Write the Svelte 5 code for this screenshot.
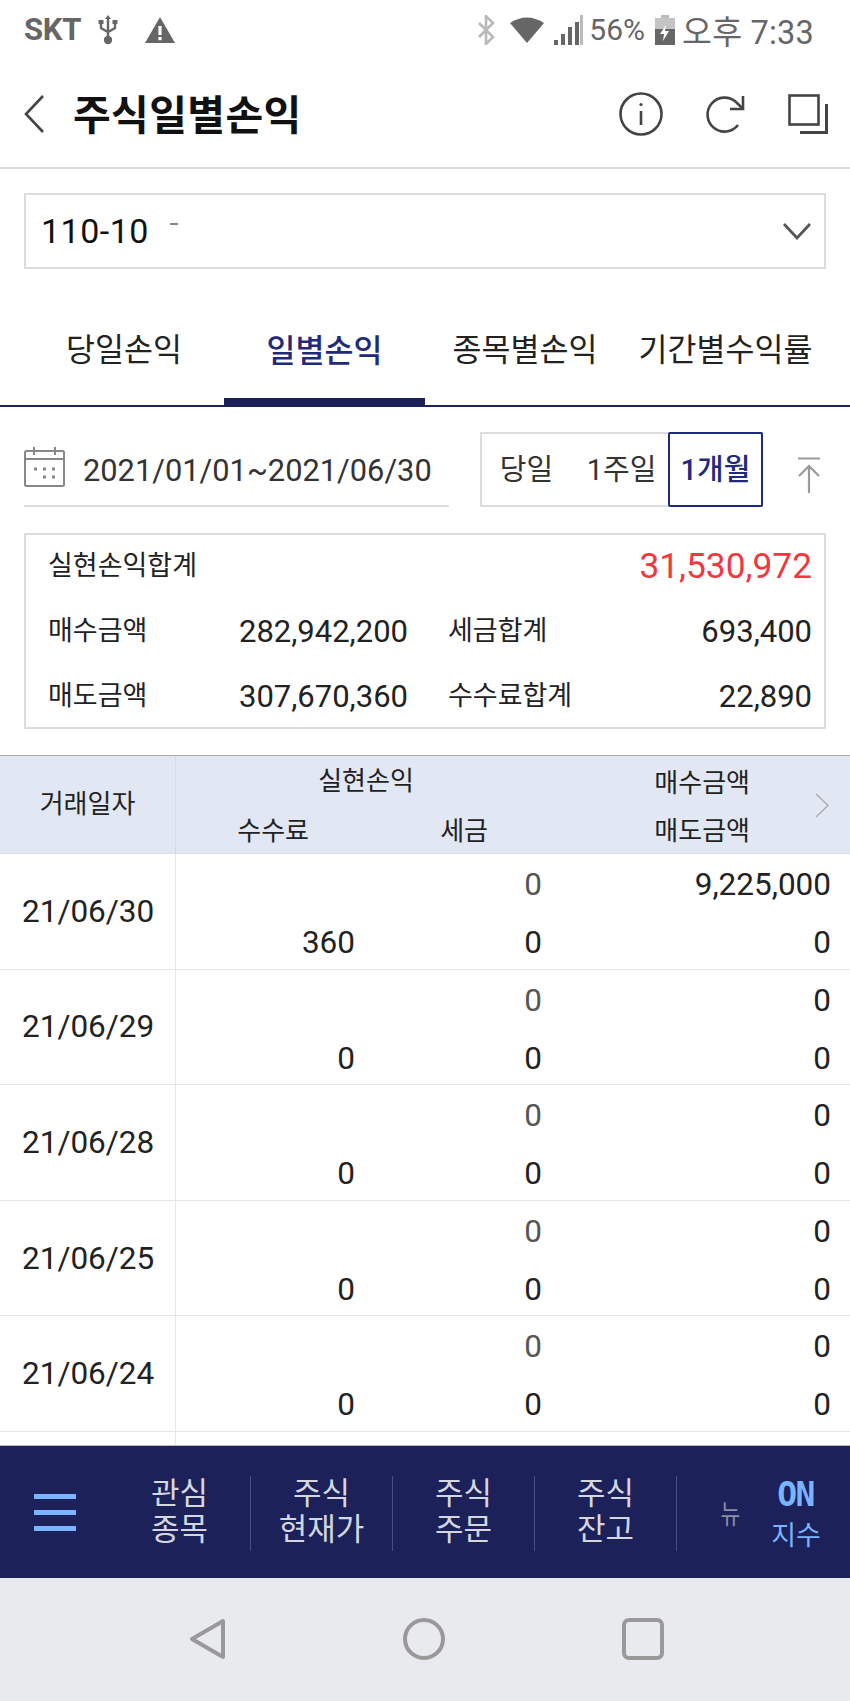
<script>
  const rows = [
    { date: '21/06/30', a: '0', b: '9,225,000', fee: '360', tax: '0', sell: '0' },
    { date: '21/06/29', a: '0', b: '0', fee: '0', tax: '0', sell: '0' },
    { date: '21/06/28', a: '0', b: '0', fee: '0', tax: '0', sell: '0' },
    { date: '21/06/25', a: '0', b: '0', fee: '0', tax: '0', sell: '0' },
    { date: '21/06/24', a: '0', b: '0', fee: '0', tax: '0', sell: '0' }
  ];
  const tabs = ['당일손익', '일별손익', '종목별손익', '기간별수익률'];
  const quick = [
    ['관심', '종목'],
    ['주식', '현재가'],
    ['주식', '주문'],
    ['주식', '잔고']
  ];
</script>

<div class="screen">
  <div class="status">
    <span class="carrier">SKT</span>
    <svg class="usb" width="22" height="30" viewBox="0 0 22 30" fill="none" stroke="#666" stroke-width="2.4">
      <path d="M11 2v24M4 8v5l7 4 7-4V8" />
      <circle cx="11" cy="25" r="3" fill="#666" />
      <path d="M11 0l3 4H8z" fill="#666" stroke="none" />
      <rect x="1.5" y="5" width="5" height="4" fill="#666" stroke="none" />
      <rect x="15.5" y="5" width="5" height="4" fill="#666" stroke="none" />
    </svg>
    <svg class="warn" width="32" height="28" viewBox="0 0 32 28">
      <path d="M16 1L31 27H1z" fill="#666" />
      <rect x="14.4" y="10" width="3.2" height="9" fill="#fff" />
      <rect x="14.4" y="21" width="3.2" height="3.2" fill="#fff" />
    </svg>
    <span class="spacer"></span>
    <svg width="20" height="30" viewBox="0 0 20 30" fill="none" stroke="#b9b9b9" stroke-width="2.6">
      <path d="M3 8l14 14-7 7V1l7 7L3 22" />
    </svg>
    <svg class="wifi" width="34" height="26" viewBox="0 0 34 26"><path d="M0 6Q17-5 34 6L17 26z" fill="#666" /></svg>
    <svg class="signal" width="30" height="30" viewBox="0 0 30 30">
      <rect x="1" y="25" width="4" height="5" fill="#666" />
      <rect x="8" y="19" width="4" height="11" fill="#666" />
      <rect x="15" y="12" width="4" height="18" fill="#666" />
      <rect x="22" y="7" width="4" height="23" fill="#666" />
      <rect x="27" y="0" width="3" height="30" fill="#bbb" />
    </svg>
    <span class="pct">56%</span>
    <svg class="batt" width="20" height="30" viewBox="0 0 20 30">
      <rect x="6" y="0" width="8" height="3" fill="#bbb" />
      <rect x="0" y="3" width="20" height="11" fill="#c4c4c4" />
      <rect x="0" y="14" width="20" height="16" fill="#666" />
      <path d="M11 10L5 19h4l-1 7 6-10h-4z" fill="#fff" />
    </svg>
    <span class="clock">오후 7:33</span>
  </div>

  <header class="appbar">
    <svg width="22" height="38" viewBox="0 0 22 38" fill="none" stroke="#444" stroke-width="2.6">
      <path d="M20 1L3 19l17 18" />
    </svg>
    <h1>주식일별손익</h1>
    <span class="spacer"></span>
    <svg class="ic-info" width="44" height="44" viewBox="0 0 44 44" fill="none" stroke="#444" stroke-width="2.6">
      <circle cx="22" cy="22" r="20.5" />
      <path d="M22 19v14" />
      <circle cx="22" cy="12.5" r="1.6" fill="#444" stroke="none" />
    </svg>
    <svg class="ic-refresh" width="40" height="40" viewBox="0 0 40 40" fill="none" stroke="#444" stroke-width="2.6">
      <path d="M33 31A17 17 0 1 1 31 8l6 6" />
      <path d="M38 2v13H25" />
    </svg>
    <svg class="ic-copy" width="40" height="40" viewBox="0 0 40 40" fill="none" stroke="#444" stroke-width="2.6">
      <rect x="1.5" y="1.5" width="29" height="29" />
      <path d="M38.5 10v28.5H12" stroke-width="3" />
    </svg>
  </header>

  <div class="account">
    <span>110-10</span>
    <i class="dash"></i>
    <span class="spacer"></span>
    <svg width="28" height="17" viewBox="0 0 28 17" fill="none" stroke="#555" stroke-width="2.8">
      <path d="M1 1l13 14L27 1" />
    </svg>
  </div>

  <nav class="tabs">
    {#each tabs as tab, i}
      <div class="tab" class:on={i === 1}>{tab}</div>
    {/each}
  </nav>

  <div class="filter">
    <div class="dates">
      <svg width="42" height="40" viewBox="0 0 42 40" fill="none" stroke="#888" stroke-width="2">
        <rect x="1" y="4" width="39" height="35" rx="1.5" />
        <path d="M1 12h39M10 0v8M31 0v8" />
        <path d="M10 22h3M19 22h3M28 22h3M19 30h3M28 30h3" stroke-width="3" />
      </svg>
      <span>2021/01/01~2021/06/30</span>
    </div>
    <div class="segment">
      <div class="seg s1">당일</div>
      <div class="seg s2">1주일</div>
      <div class="seg active">1개월</div>
    </div>
    <svg class="totop" width="24" height="36" viewBox="0 0 24 36" fill="none" stroke="#9a9a9a" stroke-width="2.2">
      <path d="M1 1.5h22M12 36V9M2 19L12 9l10 10" />
    </svg>
  </div>

  <section class="summary">
    <div class="sum-top">
      <span class="lab">실현손익합계</span>
      <span class="red">31,530,972</span>
    </div>
    <div class="sum-row">
      <span class="lab">매수금액</span>
      <span class="val v1">282,942,200</span>
      <span class="lab l2">세금합계</span>
      <span class="val">693,400</span>
    </div>
    <div class="sum-row">
      <span class="lab">매도금액</span>
      <span class="val v1">307,670,360</span>
      <span class="lab l2">수수료합계</span>
      <span class="val">22,890</span>
    </div>
  </section>

  <section class="table">
    <div class="thead">
      <div class="th-date">거래일자</div>
      <div class="cols">
        <div class="th-pl">실현손익</div>
        <div class="th-r">매수금액</div>
        <div class="th-fee">수수료</div>
        <div class="th-tax">세금</div>
        <div class="th-r">매도금액</div>
      </div>
      <svg class="more" width="14" height="25" viewBox="0 0 14 25" fill="none" stroke="#aaa" stroke-width="1.4">
        <path d="M1 1l12 11.5L1 24" />
      </svg>
    </div>
    <div class="tbody">
      {#each rows as r}
        <div class="row">
          <div class="date">{r.date}</div>
          <div class="cols">
            <div></div>
            <div class="num grey">{r.a}</div>
            <div class="num">{r.b}</div>
            <div class="num">{r.fee}</div>
            <div class="num">{r.tax}</div>
            <div class="num">{r.sell}</div>
          </div>
        </div>
      {/each}
      <div class="row stub"><div class="date"></div></div>
    </div>
  </section>

  <div class="quickbar">
    <div class="burger"><i></i><i></i><i></i></div>
    {#each quick as q}
      <div class="quick">{q[0]}<br />{q[1]}</div>
    {/each}
    <div class="ticker">뉴</div>
    <div class="index"><b>ON</b><span>지수</span></div>
  </div>

  <footer class="softkeys">
    <svg width="37" height="42" viewBox="0 0 37 42" fill="none" stroke="#999" stroke-width="4" stroke-linejoin="round">
      <path d="M34 3v36L3 21z" />
    </svg>
    <svg width="42" height="42" viewBox="0 0 42 42" fill="none" stroke="#999" stroke-width="4">
      <ellipse cx="21" cy="21" rx="19" ry="19" />
    </svg>
    <svg width="42" height="42" viewBox="0 0 42 42" fill="none" stroke="#999" stroke-width="4">
      <rect x="2" y="2" width="38" height="38" rx="5" />
    </svg>
  </footer>
</div>

<style>
  :global(body) {
    margin: 0;
    background: #fff;
  }

  .screen {
    width: 850px;
    height: 1701px;
    display: flex;
    flex-direction: column;
    overflow: hidden;
    font-family: Roboto, "Noto Sans CJK KR", sans-serif;
    color: #222;
  }

  .spacer {
    flex: 1;
  }

  .status {
    height: 60px;
    flex: none;
    display: flex;
    align-items: center;
    padding: 0 36px 0 24px;
    color: #666;
    box-sizing: border-box;
  }

  .carrier {
    font-size: 31px;
    font-weight: 700;
    letter-spacing: -0.3px;
    margin-bottom: 2px;
  }

  .usb {
    margin-left: 16px;
  }

  .warn {
    margin-left: 25px;
  }

  .wifi {
    margin-left: 14px;
  }

  .signal {
    margin-left: 9px;
  }

  .pct {
    font-size: 30px;
    margin-left: 6px;
    margin-bottom: 2px;
  }

  .batt {
    margin-left: 10px;
  }

  .clock {
    font-size: 32.5px;
    margin-left: 7px;
    margin-bottom: 2px;
    letter-spacing: 0.2px;
    white-space: nowrap;
  }

  .appbar {
    height: 109px;
    flex: none;
    display: flex;
    align-items: center;
    padding: 0 22px 0 23px;
    border-bottom: 2px solid #ddd;
    box-sizing: border-box;
  }

  h1 {
    margin: 0 0 4px 28px;
    font-size: 41px;
    font-weight: 700;
    color: #111;
    letter-spacing: 0.4px;
  }

  .ic-refresh {
    margin-left: 42px;
  }

  .ic-copy {
    margin-left: 43px;
  }

  .account {
    flex: none;
    height: 76px;
    margin: 24px 24px 0;
    padding: 0 13px 0 15px;
    display: flex;
    align-items: center;
    border: 2px solid #ddd;
    box-sizing: border-box;
    font-size: 34px;
    letter-spacing: 0.5px;
    color: #111;
  }

  .dash {
    width: 8px;
    height: 2px;
    background: #888;
    margin: -14px 0 0 21px;
  }

  .tabs {
    flex: none;
    height: 113px;
    margin-top: 25px;
    padding: 0 24px;
    display: grid;
    grid-template-columns: 200px 201px 200px 201px;
    border-bottom: 2px solid #1c2159;
    box-sizing: border-box;
  }

  .tab {
    display: flex;
    justify-content: center;
    align-items: center;
    padding-bottom: 6px;
    font-size: 31.5px;
    color: #222;
    white-space: nowrap;
    height: 111px;
    box-sizing: border-box;
  }

  .tab.on {
    color: #1f2a7c;
    font-weight: 500;
    border-bottom: 9px solid #1c2159;
    padding-bottom: 0;
    margin-bottom: -2px;
    height: 113px;
    padding-top: 3px;
  }

  .filter {
    flex: none;
    height: 75px;
    margin-top: 25px;
    padding: 0 24px;
    display: flex;
    align-items: stretch;
  }

  .dates {
    width: 425px;
    box-sizing: border-box;
    display: flex;
    align-items: center;
    gap: 17px;
    border-bottom: 2px solid #ddd;
    font-size: 30.8px;
    color: #333;
    white-space: nowrap;
  }

  .dates svg {
    margin-bottom: 4px;
  }

  .dates span {
    margin-bottom: -3px;
  }

  .segment {
    width: 283px;
    margin-left: 31px;
    display: flex;
    border: 2px solid #ddd;
    box-sizing: border-box;
    font-size: 29px;
    color: #333;
    position: relative;
  }

  .seg {
    display: flex;
    align-items: center;
    justify-content: center;
    padding-bottom: 6px;
    white-space: nowrap;
    box-sizing: border-box;
  }

  .s1 {
    width: 89px;
    padding-left: 0;
  }

  .s2 {
    width: 99px;
    padding-left: 2px;
  }

  .seg.active {
    flex: 1;
    margin: -2px;
    border: 2px solid #1c2a7c;
    color: #1f2a7c;
    font-weight: 500;
    border-radius: 2px;
  }

  .totop {
    margin: 25px 0 0 34px;
  }

  .summary {
    flex: none;
    height: 196px;
    margin: 26px 24px 0;
    padding: 0 12px 0 22px;
    border: 2px solid #ddd;
    box-sizing: border-box;
    display: flex;
    flex-direction: column;
  }

  .sum-top {
    height: 64px;
    display: flex;
    justify-content: space-between;
    align-items: center;
  }

  .sum-row {
    height: 65px;
    display: flex;
    align-items: center;
    padding-top: 2px;
    box-sizing: content-box;
  }

  .sum-row + .sum-row {
    height: 63px;
    padding-top: 2px;
  }

  .lab {
    font-size: 27px;
    position: relative;
    top: -3px;
    color: #222;
    white-space: nowrap;
    width: 115px;
  }

  .sum-top .lab {
    width: auto;
    top: -3px;
  }

  .red {
    font-size: 35.3px;
    color: #f0393f;
  }

  .val {
    font-size: 31px;
    margin-left: auto;
    color: #222;
  }

  .v1 {
    margin-left: 0;
    width: 245px;
    text-align: right;
  }

  .l2 {
    margin-left: 40px;
  }

  .table {
    flex: 1;
    min-height: 0;
    margin-top: 26px;
    display: flex;
    flex-direction: column;
    overflow: hidden;
  }

  .thead {
    flex: none;
    height: 99px;
    display: flex;
    position: relative;
    background: #e2e8f3;
    border-top: 1px solid #aaa;
    border-bottom: 1px solid #d9dfeb;
    box-sizing: border-box;
    font-size: 26px;
    color: #222;
  }

  .th-date {
    width: 176px;
    flex: none;
    border-right: 1px solid #d5dbe6;
    display: flex;
    align-items: center;
    justify-content: center;
    padding-bottom: 6px;
    box-sizing: border-box;
  }

  .cols {
    display: grid;
    grid-template-columns: 177px 187px 289px;
    flex: none;
    padding-left: 2px;
  }

  .thead .cols {
    grid-template-rows: 1fr 1fr;
  }

  .thead .cols > div {
    display: flex;
    align-items: center;
    justify-content: flex-end;
  }

  .thead .cols .th-pl {
    grid-column: span 2;
    justify-content: center;
    padding-left: 12px;
    padding-bottom: 3px;
  }

  .thead .cols .th-r {
    padding-right: 81px;
  }

  .thead .cols > .th-r:first-of-type {
    padding-bottom: 3px;
  }

  .thead .cols .th-fee {
    padding-right: 46px;
  }

  .thead .cols .th-tax {
    padding-right: 54px;
  }

  .more {
    position: absolute;
    left: 815px;
    top: 37px;
  }

  .row {
    height: 115.6px;
    display: flex;
    border-bottom: 1px solid #e6e6e6;
    box-sizing: border-box;
  }

  .date {
    width: 176px;
    flex: none;
    border-right: 1px solid #e6e6e6;
    display: flex;
    align-items: center;
    padding-left: 22px;
    box-sizing: border-box;
    font-size: 31.5px;
    color: #222;
  }

  .row .cols {
    padding-top: 2px;
    box-sizing: border-box;
    grid-template-rows: 57px 57px;
    row-gap: 1px;
  }

  .num {
    font-size: 31.5px;
    text-align: right;
    line-height: 57px;
    color: #222;
  }

  .grey {
    color: #555;
  }

  .quickbar {
    flex: none;
    height: 133px;
    display: flex;
    align-items: center;
    background: #1c2159;
    border-top: 1px solid #bbb;
    box-sizing: border-box;
    position: relative;
  }

  .burger {
    width: 42px;
    margin: 0 33px 0 34px;
    display: flex;
    flex-direction: column;
    gap: 11px;
    flex: none;
  }

  .burger i {
    height: 5px;
    background: #7ab4ff;
  }

  .quick {
    width: 142px;
    height: 75px;
    flex: none;
    box-sizing: border-box;
    border-right: 1px solid #4a4f80;
    text-align: center;
    font-size: 31px;
    line-height: 36px;
    color: #d5d7e0;
    margin-top: 2px;
  }

  .ticker {
    margin-left: 41px;
    font-size: 27px;
    color: #8a8da8;
    transform: scaleX(0.8);
  }

  .index {
    position: absolute;
    left: 766px;
    top: 0;
    width: 62px;
    height: 100%;
    display: flex;
    flex-direction: column;
    align-items: center;
    padding-top: 29px;
    box-sizing: border-box;
    color: #7ab4ff;
  }

  .index b {
    font-size: 33px;
    line-height: 40px;
    font-family: "DejaVu Sans Mono", monospace;
    letter-spacing: -1.5px;
    margin-left: -3px;
  }

  .index span {
    font-size: 27px;
    line-height: 36px;
    margin-top: 3px;
    margin-left: -2px;
    white-space: nowrap;
  }

  .softkeys {
    flex: none;
    height: 123px;
    background: #e9eaed;
    display: flex;
    align-items: flex-start;
    padding: 40px 186px 0 189px;
    justify-content: space-between;
    box-sizing: border-box;
  }
</style>
